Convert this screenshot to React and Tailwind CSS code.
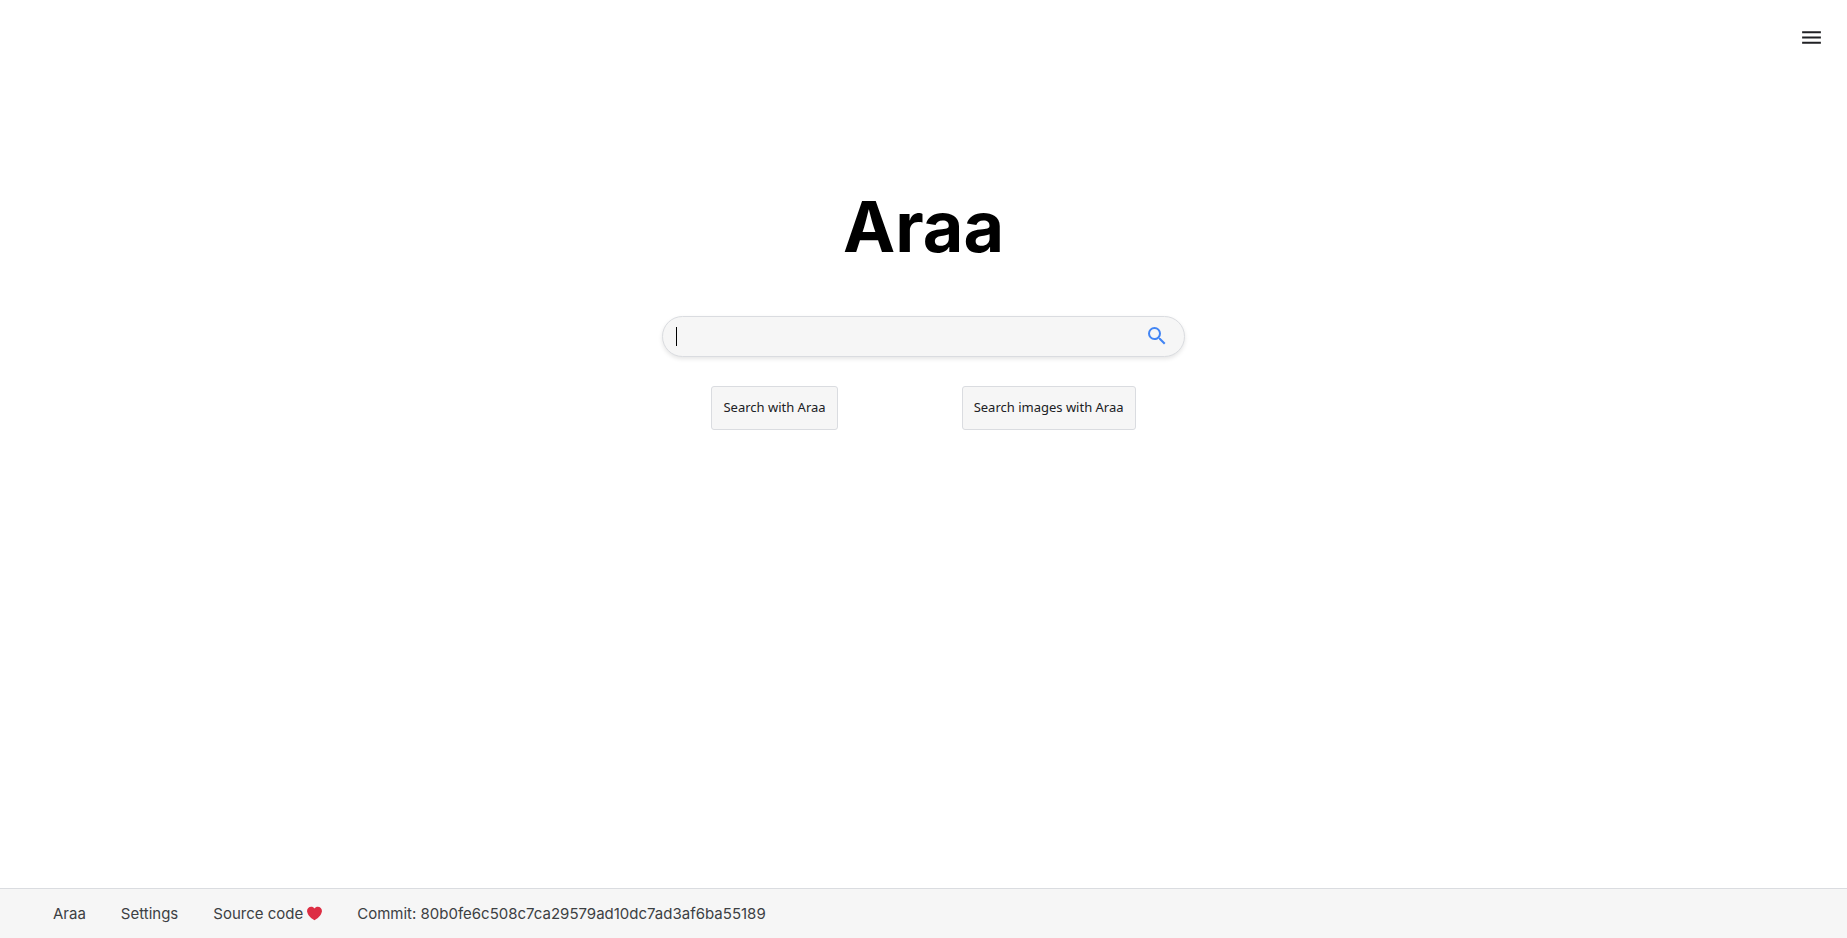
import { MdMenu, MdSearch } from "react-icons/md";

const footerLinks = ["Araa", "Settings"];

function Heart() {
  return (
    <svg viewBox="0 0 36 36" className="h-[15px] w-[15px]" aria-hidden="true">
      <path
        fill="#DD2E44"
        d="M35.885 11.833c0-5.45-4.418-9.868-9.867-9.868-3.308 0-6.227 1.633-8.018 4.129-1.791-2.496-4.71-4.129-8.017-4.129-5.45 0-9.868 4.417-9.868 9.868 0 .772.098 1.52.266 2.241C1.751 22.587 11.216 31.568 18 34.034c6.783-2.466 16.249-11.447 17.617-19.959.17-.721.268-1.469.268-2.242z"
      />
    </svg>
  );
}

function SearchButton({ children }) {
  return (
    <button
      type="submit"
      className="h-11 rounded-[3px] border border-[#dadce0] bg-[#f6f6f6] px-[11px] font-['Noto_Sans',sans-serif] text-[13px] text-[#202124]"
    >
      {children}
    </button>
  );
}

export default function App() {
  return (
    <div className="flex min-h-screen flex-col bg-white font-['Inter',sans-serif]">
      <header className="flex justify-end px-[23px] pt-[25px]">
        <button type="button" aria-label="Menu" className="text-[#202124]">
          <MdMenu size={25} />
        </button>
      </header>

      <main className="flex grow flex-col items-center px-4 pt-[133px]">
        <h1 className="text-[70px] leading-[88px] font-bold text-black">Araa</h1>
        <form
          className="mt-[45px] flex w-full max-w-[523px] flex-col items-center"
          onSubmit={(e) => e.preventDefault()}
        >
          <div className="relative flex h-[41px] w-full items-center rounded-full border border-[#dadce0] bg-[#f6f6f6] pr-[15px] pl-[13px] shadow-[0_2px_4px_rgba(0,0,0,0.1)]">
            <span className="absolute left-[13px] h-[19px] w-px bg-black" aria-hidden="true" />
            <input
              type="text"
              name="q"
              aria-label="Search"
              autoComplete="off"
              className="h-full min-w-0 grow bg-transparent text-base text-black caret-transparent outline-none"
            />
            <button type="submit" aria-label="Search" className="pb-px text-[#4285f4]">
              <MdSearch size={24} />
            </button>
          </div>
          <div className="mt-[29px] flex flex-wrap justify-center gap-x-[124px] gap-y-4">
            <SearchButton>Search with Araa</SearchButton>
            <SearchButton>Search images with Araa</SearchButton>
          </div>
        </form>
      </main>

      <footer className="flex min-h-[50px] flex-wrap items-center gap-x-[35px] border-t border-[#dadce0] bg-[#f6f6f6] px-[53px] text-[15px] leading-5 text-[#3c4043]">
        {footerLinks.map((label) => (
          <a key={label} href="#">
            {label}
          </a>
        ))}
        <a href="#" className="flex items-center gap-1">
          Source code
          <Heart />
        </a>
        <a href="#">Commit: 80b0fe6c508c7ca29579ad10dc7ad3af6ba55189</a>
      </footer>
    </div>
  );
}
